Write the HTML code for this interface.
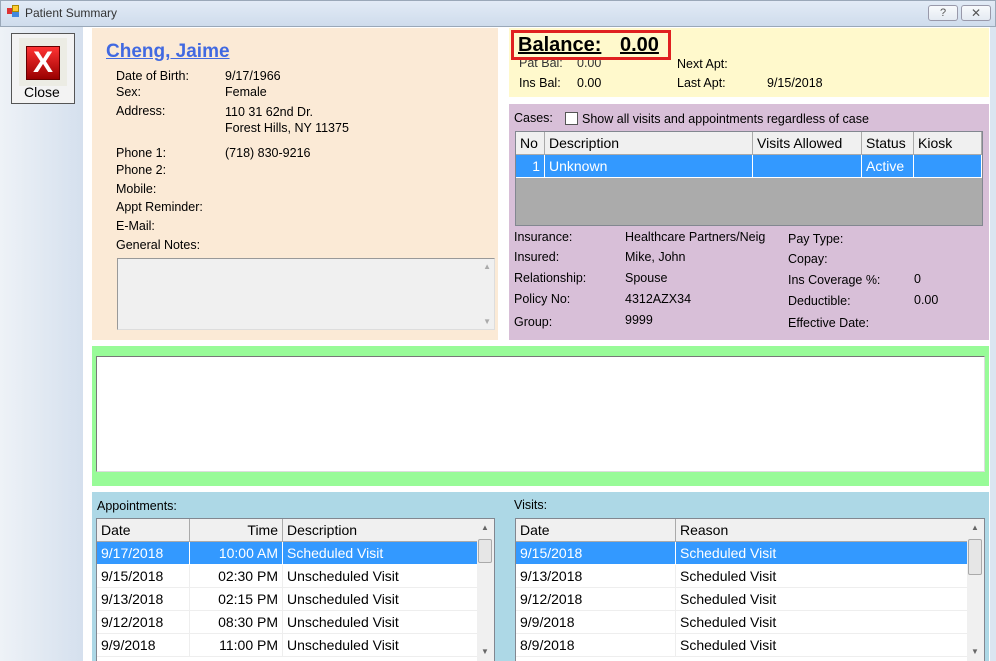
<!DOCTYPE html>
<html><head><style>
*{margin:0;padding:0;box-sizing:border-box}
html,body{width:996px;height:661px;overflow:hidden}
body{position:relative;font-family:"Liberation Sans",sans-serif;font-size:12.5px;color:#000;background:#fff}
.a{position:absolute;white-space:nowrap}
.g{position:absolute;border:1px solid #828790;background:#fff;overflow:hidden}
.hd{position:absolute;top:0;height:23px;background:#f0f0f0;border-right:1px solid #aaa;border-bottom:1px solid #aaa;font-size:14px;padding:3px 4px}
.c{position:absolute;height:23px;font-size:14px;padding:3px 4px;border-right:1px solid #eee;border-bottom:1px solid #eee;white-space:nowrap}
.s{background:#3399ff;color:#fff;border-color:#fff}
.sb{position:absolute;top:0;bottom:0;width:17px;background:#f0f0f0;right:0}
</style></head><body>
<div class="a" style="left:0;top:0;width:996px;height:27px;background:linear-gradient(#e2ebf6,#cfdcec);border:1px solid #9aa8b8"></div>
<div class="a" style="left:7px;top:8px;width:6px;height:6px;background:#d33"></div>
<div class="a" style="left:12px;top:5px;width:7px;height:7px;background:#fc3;border:1px solid #a80"></div>
<div class="a" style="left:12px;top:12px;width:7px;height:5px;background:#48d"></div>
<div class="a" style="left:25px;top:6px;font-size:12px;color:#333">Patient Summary</div>
<div class="a" style="left:928px;top:5px;width:30px;height:16px;border:1px solid #99a;border-radius:3px;background:linear-gradient(#f8fafc,#e4eaf2);text-align:center;font-size:11px;line-height:14px;color:#555">?</div>
<div class="a" style="left:961px;top:5px;width:30px;height:16px;border:1px solid #99a;border-radius:3px;background:linear-gradient(#f8fafc,#e4eaf2);text-align:center;font-size:12px;line-height:14px;color:#555">✕</div>
<div class="a" style="left:0;top:27px;width:83px;height:634px;background:linear-gradient(90deg,#eef2f7,#d5e0ee)"></div>
<div class="a" style="left:83px;top:27px;width:913px;height:634px;background:#fff;border-right:6px solid #dbe5f1"></div>
<div class="a" style="left:11px;top:33px;width:64px;height:71px;border:1px solid #555;background:#f3f3f3"></div>
<div class="a" style="left:19px;top:38px;width:48px;height:48px;background:#ecece4"></div>
<div class="a" style="left:26px;top:46px;width:34px;height:34px;background:linear-gradient(#f33,#900);border:1px solid #600;color:#fff;font-weight:bold;font-size:30px;line-height:32px;text-align:center">X</div>
<div class="a" style="left:24px;top:84px;font-size:14px">Close</div>
<div class="a" style="left:92px;top:28px;width:406px;height:312px;background:#fbead6"></div>
<div class="a" style="left:106px;top:41px;font-size:19px;font-weight:bold;color:#4169e1;text-decoration:underline">Cheng, Jaime</div>
<div class="a" style="left:116px;top:69px">Date of Birth:</div><div class="a" style="left:225px;top:69px">9/17/1966</div>
<div class="a" style="left:116px;top:85px">Sex:</div><div class="a" style="left:225px;top:85px">Female</div>
<div class="a" style="left:116px;top:104px">Address:</div><div class="a" style="left:225px;top:105px">110 31 62nd Dr.</div>
<div class="a" style="left:225px;top:121px">Forest Hills, NY 11375</div>
<div class="a" style="left:116px;top:146px">Phone 1:</div><div class="a" style="left:225px;top:146px">(718) 830-9216</div>
<div class="a" style="left:116px;top:163px">Phone 2:</div>
<div class="a" style="left:116px;top:182px">Mobile:</div>
<div class="a" style="left:116px;top:200px">Appt Reminder:</div>
<div class="a" style="left:116px;top:219px">E-Mail:</div>
<div class="a" style="left:116px;top:238px">General Notes:</div>
<div class="a" style="left:117px;top:258px;width:378px;height:72px;background:#f0f0f0;border:1px solid #999;border-right-color:#ddd;border-bottom-color:#ddd"><div class="a" style="right:3px;top:3px;font-size:8px;color:#aaa">▲</div><div class="a" style="right:3px;bottom:3px;font-size:8px;color:#aaa">▼</div></div>
<div class="a" style="left:509px;top:28px;width:480px;height:69px;background:#fff9cc"></div>
<div class="a" style="left:519px;top:56px;color:#333">Pat Bal:</div><div class="a" style="left:577px;top:56px;color:#333">0.00</div>
<div class="a" style="left:511px;top:30px;width:160px;height:30px;border:3px solid #e02020;background:#fff9cc"></div>
<div class="a" style="left:518px;top:34px;font-size:20px;font-weight:bold;text-decoration:underline">Balance:</div>
<div class="a" style="left:620px;top:34px;font-size:20px;font-weight:bold;text-decoration:underline">0.00</div>
<div class="a" style="left:519px;top:76px">Ins Bal:</div><div class="a" style="left:577px;top:76px">0.00</div>
<div class="a" style="left:677px;top:57px">Next Apt:</div>
<div class="a" style="left:677px;top:76px">Last Apt:</div><div class="a" style="left:767px;top:76px">9/15/2018</div>
<div class="a" style="left:509px;top:104px;width:480px;height:236px;background:#d8bfd8"></div>
<div class="a" style="left:514px;top:111px">Cases:</div>
<div class="a" style="left:565px;top:112px;width:13px;height:13px;background:#fff;border:1px solid #555"></div>
<div class="a" style="left:582px;top:112px">Show all visits and appointments regardless of case</div>
<div class="g" style="left:515px;top:131px;width:468px;height:95px;background:#ababab">
<div class="hd" style="left:0;width:29px">No</div><div class="hd" style="left:29px;width:208px">Description</div><div class="hd" style="left:237px;width:109px">Visits Allowed</div><div class="hd" style="left:346px;width:52px">Status</div><div class="hd" style="left:398px;width:68px">Kiosk</div>
<div class="c s" style="left:0;top:23px;width:29px;text-align:right">1</div><div class="c s" style="left:29px;top:23px;width:208px">Unknown</div><div class="c s" style="left:237px;top:23px;width:109px"></div><div class="c s" style="left:346px;top:23px;width:52px">Active</div><div class="c s" style="left:398px;top:23px;width:68px"></div>
</div>
<div class="a" style="left:514px;top:230px">Insurance:</div><div class="a" style="left:625px;top:230px">Healthcare Partners/Neig</div>
<div class="a" style="left:514px;top:250px">Insured:</div><div class="a" style="left:625px;top:250px">Mike, John</div>
<div class="a" style="left:514px;top:271px">Relationship:</div><div class="a" style="left:625px;top:271px">Spouse</div>
<div class="a" style="left:514px;top:292px">Policy No:</div><div class="a" style="left:625px;top:292px">4312AZX34</div>
<div class="a" style="left:514px;top:315px">Group:</div><div class="a" style="left:625px;top:313px">9999</div>
<div class="a" style="left:788px;top:232px">Pay Type:</div>
<div class="a" style="left:788px;top:252px">Copay:</div>
<div class="a" style="left:788px;top:273px">Ins Coverage %:</div><div class="a" style="left:914px;top:272px">0</div>
<div class="a" style="left:788px;top:294px">Deductible:</div><div class="a" style="left:914px;top:293px">0.00</div>
<div class="a" style="left:788px;top:316px">Effective Date:</div>
<div class="a" style="left:92px;top:346px;width:897px;height:140px;background:#98fb98"></div>
<div class="a" style="left:96px;top:356px;width:889px;height:116px;background:#fff;border:1px solid #777;border-right-color:#ddd;border-bottom-color:#ddd"></div>
<div class="a" style="left:92px;top:492px;width:897px;height:169px;background:#add8e6"></div>
<div class="a" style="left:97px;top:499px">Appointments:</div>
<div class="a" style="left:514px;top:498px">Visits:</div>
<div class="g" style="left:96px;top:518px;width:399px;height:150px">
<div class="hd" style="left:0;width:93px">Date</div><div class="hd" style="left:93px;width:93px;text-align:right">Time</div><div class="hd" style="left:186px;width:195px">Description</div>
<div class="c s" style="left:0;top:23px;width:93px">9/17/2018</div><div class="c s" style="left:93px;top:23px;width:93px;text-align:right">10:00 AM</div><div class="c s" style="left:186px;top:23px;width:195px">Scheduled Visit</div>
<div class="c" style="left:0;top:46px;width:93px">9/15/2018</div><div class="c" style="left:93px;top:46px;width:93px;text-align:right">02:30 PM</div><div class="c" style="left:186px;top:46px;width:195px">Unscheduled Visit</div>
<div class="c" style="left:0;top:69px;width:93px">9/13/2018</div><div class="c" style="left:93px;top:69px;width:93px;text-align:right">02:15 PM</div><div class="c" style="left:186px;top:69px;width:195px">Unscheduled Visit</div>
<div class="c" style="left:0;top:92px;width:93px">9/12/2018</div><div class="c" style="left:93px;top:92px;width:93px;text-align:right">08:30 PM</div><div class="c" style="left:186px;top:92px;width:195px">Unscheduled Visit</div>
<div class="c" style="left:0;top:115px;width:93px">9/9/2018</div><div class="c" style="left:93px;top:115px;width:93px;text-align:right">11:00 PM</div><div class="c" style="left:186px;top:115px;width:195px">Unscheduled Visit</div>
<div class="sb"><div class="a" style="left:4px;top:4px;font-size:8px;color:#666">▲</div><div class="a" style="left:1px;top:20px;width:14px;height:24px;background:#e6e6e6;border:1px solid #aaa;border-radius:2px"></div><div class="a" style="left:4px;top:128px;font-size:8px;color:#666">▼</div></div>
</div>
<div class="g" style="left:515px;top:518px;width:470px;height:150px">
<div class="hd" style="left:0;width:160px">Date</div><div class="hd" style="left:160px;width:293px">Reason</div>
<div class="c s" style="left:0;top:23px;width:160px">9/15/2018</div><div class="c s" style="left:160px;top:23px;width:293px">Scheduled Visit</div>
<div class="c" style="left:0;top:46px;width:160px">9/13/2018</div><div class="c" style="left:160px;top:46px;width:293px">Scheduled Visit</div>
<div class="c" style="left:0;top:69px;width:160px">9/12/2018</div><div class="c" style="left:160px;top:69px;width:293px">Scheduled Visit</div>
<div class="c" style="left:0;top:92px;width:160px">9/9/2018</div><div class="c" style="left:160px;top:92px;width:293px">Scheduled Visit</div>
<div class="c" style="left:0;top:115px;width:160px">8/9/2018</div><div class="c" style="left:160px;top:115px;width:293px">Scheduled Visit</div>
<div class="sb"><div class="a" style="left:4px;top:4px;font-size:8px;color:#666">▲</div><div class="a" style="left:1px;top:20px;width:14px;height:36px;background:#e6e6e6;border:1px solid #aaa;border-radius:2px"></div><div class="a" style="left:4px;top:128px;font-size:8px;color:#666">▼</div></div>
</div>
</body></html>
